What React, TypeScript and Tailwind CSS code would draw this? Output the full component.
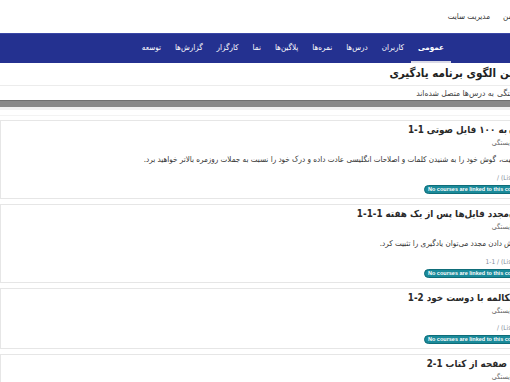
import React from "react";

const FONT = { fontFamily: '"DejaVu Sans Condensed", "DejaVu Sans", sans-serif' };

function Line({
  spacer,
  word,
  rest,
  restClass,
  className,
}: {
  spacer: string;
  word?: React.ReactNode;
  rest: React.ReactNode;
  restClass: string;
  className: string;
}) {
  return (
    <div className={"flex whitespace-nowrap " + className}>
      <span className={spacer + " shrink-0 text-left"}>{word}</span>
      <span className={restClass}>{rest}</span>
    </div>
  );
}

function Badge() {
  return (
    <div className="flex mt-[2px] h-[9px]">
      <div className="w-[115px] shrink-0 flex justify-end">
        <span
          dir="ltr"
          className="inline-flex items-center h-[9px] rounded-full bg-[#1a8a9a] border border-[#0f6d79] text-white font-bold text-[5.5px] px-[3px] whitespace-nowrap"
          style={{ fontFamily: '"Liberation Sans", Arial, sans-serif' }}
        >
          No courses are linked to this competency
        </span>
      </div>
    </div>
  );
}

function Link({ extra }: { extra?: string }) {
  return (
    <Line
      className="text-[6.5px] leading-[9px] text-[#7f8b99] mt-[8px]"
      spacer="w-[38px]"
      word={<span dir="ltr">(Listening)</span>}
      restClass="mr-[2px]"
      rest={extra ? "/ " + extra : "/"}
    />
  );
}

function Sub() {
  return (
    <Line
      className="text-[7px] leading-[10px] text-[#666]"
      spacer="w-[22px]"
      rest="شایستگی"
      restClass=""
    />
  );
}

function Title({ spacer, word, restClass, rest }: { spacer: string; word?: string; restClass: string; rest: string }) {
  return (
    <Line
      className="text-[9.75px] leading-[16px] font-bold text-[#2a2a2a]"
      spacer={spacer}
      word={word}
      restClass={restClass}
      rest={rest}
    />
  );
}

export default function App() {
  const nav = [
    "عمومی",
    "کاربران",
    "درس‌ها",
    "نمره‌ها",
    "پلاگین‌ها",
    "نما",
    "کارگزار",
    "گزارش‌ها",
    "توسعه",
  ];
  return (
    <div className="w-[510px] h-[382px] overflow-hidden bg-white" style={FONT}>
      <div dir="rtl" className="w-[540px]">
        {/* top bar */}
        <Line
          className="h-[33px] items-center text-[8px] text-[#333]"
          spacer="w-[37px]"
          word="من"
          restClass="mr-[13px]"
          rest="مدیریت سایت"
        />
        {/* nav */}
        <div className="h-[30px] bg-[#243190] border-t border-[#3a47a6] flex items-stretch pr-[89px]">
          {nav.map((n, i) => (
            <div
              key={n}
              className={
                "flex items-center px-[7px] text-[8px] text-white whitespace-nowrap " +
                (i === 0 ? "font-bold border-b-2 border-[#d9d9e6]" : "border-b-2 border-transparent")
              }
            >
              {n}
            </div>
          ))}
        </div>
        {/* heading */}
        <Line
          className="h-[23px] items-center border-b border-[#ececec] text-[11.5px] font-bold text-[#222]"
          spacer="w-[40px]"
          word="تعیین"
          restClass="mr-[4px]"
          rest="الگوی برنامه یادگیری"
        />
        <Line
          className="h-[14px] items-center text-[8.5px] text-[#444]"
          spacer="w-[43px]"
          word="شایستگی"
          restClass="mr-[3px]"
          rest="به درس‌ها متصل شده‌اند"
        />
        <div className="h-[7px] bg-[#888] border-t border-[#6f6f6f]" />
        <div className="h-[3px] bg-[#f1f1f1]" />
        <div className="h-[1px] bg-[#f3f3f3] mt-[5px]" />
        {/* cards */}
        <div className="flex flex-col gap-[5px] mt-[4px]">
          {/* card 1 */}
          <div className="border border-[#e6e6e6] bg-white pt-[1px] pb-[4px]">
            <Title spacer="w-[30px]" word="دادن" restClass="mr-[2px]" rest="به ۱۰۰ فایل صوتی 1-1" />
            <Sub />
            <Line
              className="text-[8px] leading-[12px] text-[#333] mt-[6px]"
              spacer="w-[40px]"
              word="فعالیت،"
              restClass="mr-[3px]"
              rest="گوش خود را به شنیدن کلمات و اصلاحات انگلیسی عادت داده و درک خود را نسبت به جملات روزمره بالاتر خواهید برد."
            />
            <Link />
            <Badge />
          </div>
          {/* card 2 */}
          <div className="border border-[#e6e6e6] bg-white pt-[1px] pb-[4px]">
            <Title spacer="w-[30px]" word="دادن" restClass="" rest="مجدد فایل‌ها پس از یک هفته 1-1-1" />
            <Sub />
            <Line
              className="text-[8px] leading-[12px] text-[#333] mt-[6px]"
              spacer="w-[35px]"
              word="گوش"
              restClass="mr-[2px]"
              rest="دادن مجدد می‌توان یادگیری را تثبیت کرد."
            />
            <Link extra="1-1" />
            <Badge />
          </div>
          {/* card 3 */}
          <div className="border border-[#e6e6e6] bg-white pt-[1px] pb-[4px]">
            <Title spacer="w-[24px]" restClass="" rest="مکالمه با دوست خود 2-1" />
            <Sub />
            <Link />
            <Badge />
          </div>
          {/* card 4 */}
          <div className="border border-[#e6e6e6] bg-white pt-[1px] pb-[4px]">
            <Title spacer="w-[29px]" word="یک" restClass="mr-[3px]" rest="صفحه از کتاب 1-2" />
            <Sub />
            <Link />
            <Badge />
          </div>
        </div>
      </div>
    </div>
  );
}
